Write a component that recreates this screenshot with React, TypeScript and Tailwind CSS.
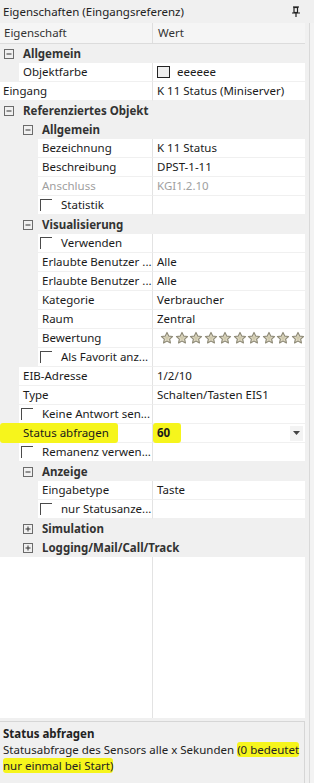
import React from 'react';

type Row =
  | { kind: 'group'; level: 0 | 1; label: string; open: boolean }
  | {
      kind: 'prop';
      margin: 0 | 19 | 38;
      label: string;
      value?: React.ReactNode;
      check?: boolean;
      muted?: boolean;
      marked?: boolean;
    };

const Stars: React.FC = () => (
  <div className="flex items-center gap-[0.5px] pl-[3px]">
    {Array.from({ length: 10 }).map((_, i) => (
      <svg key={i} width="14" height="14" viewBox="0 0 24 24">
        <path
          d="M12 2.5l2.9 6.2 6.6.7-5 4.5 1.4 6.6L12 17.2l-5.9 3.3 1.4-6.6-5-4.5 6.6-.7z"
          fill="#e6e1cc"
          stroke="#8f8b78"
          strokeWidth="2"
          strokeLinejoin="round"
        />
        <path d="M12 7l1.5 3.3 3.4.4-2.6 2.3.8 3.4L12 14.7l-3.1 1.7.8-3.4-2.6-2.3 3.4-.4z" fill="#cfc9ad" />
      </svg>
    ))}
  </div>
);

const rows: Row[] = [
  { kind: 'group', level: 0, label: 'Allgemein', open: true },
  {
    kind: 'prop',
    margin: 19,
    label: 'Objektfarbe',
    value: (
      <span className="flex items-center gap-[7px]">
        <span className="w-[13px] h-[12px] border border-[#222] bg-[#eeeeee]" />
        eeeeee
      </span>
    ),
  },
  { kind: 'prop', margin: 0, label: 'Eingang', value: 'K 11 Status (Miniserver)' },
  { kind: 'group', level: 0, label: 'Referenziertes Objekt', open: true },
  { kind: 'group', level: 1, label: 'Allgemein', open: true },
  { kind: 'prop', margin: 38, label: 'Bezeichnung', value: 'K 11 Status' },
  { kind: 'prop', margin: 38, label: 'Beschreibung', value: 'DPST-1-11' },
  { kind: 'prop', margin: 38, label: 'Anschluss', value: 'KGI1.2.10', muted: true },
  { kind: 'prop', margin: 38, label: 'Statistik', check: true },
  { kind: 'group', level: 1, label: 'Visualisierung', open: true },
  { kind: 'prop', margin: 38, label: 'Verwenden', check: true },
  { kind: 'prop', margin: 38, label: 'Erlaubte Benutzer ...', value: 'Alle' },
  { kind: 'prop', margin: 38, label: 'Erlaubte Benutzer ...', value: 'Alle' },
  { kind: 'prop', margin: 38, label: 'Kategorie', value: 'Verbraucher' },
  { kind: 'prop', margin: 38, label: 'Raum', value: 'Zentral' },
  { kind: 'prop', margin: 38, label: 'Bewertung', value: <Stars /> },
  { kind: 'prop', margin: 38, label: 'Als Favorit anz...', check: true },
  { kind: 'prop', margin: 19, label: 'EIB-Adresse', value: '1/2/10' },
  { kind: 'prop', margin: 19, label: 'Type', value: 'Schalten/Tasten EIS1' },
  { kind: 'prop', margin: 19, label: 'Keine Antwort sen...', check: true },
  { kind: 'prop', margin: 19, label: 'Status abfragen', value: '60', marked: true },
  { kind: 'prop', margin: 19, label: 'Remanenz verwen...', check: true },
  { kind: 'group', level: 1, label: 'Anzeige', open: true },
  { kind: 'prop', margin: 38, label: 'Eingabetype', value: 'Taste' },
  { kind: 'prop', margin: 38, label: 'nur Statusanze...', check: true },
  { kind: 'group', level: 1, label: 'Simulation', open: false },
  { kind: 'group', level: 1, label: 'Logging/Mail/Call/Track', open: false },
];

const ExpandBox: React.FC<{ open: boolean }> = ({ open }) => (
  <svg width="10" height="10" viewBox="0 0 10 10" className="shrink-0">
    <rect x="0.5" y="0.5" width="9" height="9" fill="none" stroke="#6b6b6b" />
    <line x1="2.5" y1="5" x2="7.5" y2="5" stroke="#333" />
    {!open && <line x1="5" y1="2.5" x2="5" y2="7.5" stroke="#333" />}
  </svg>
);

const Checkbox: React.FC = () => (
  <span className="w-[12px] h-[12px] border-t border-l border-[#4a4a4a] shrink-0" />
);

const GridRow: React.FC<{ row: Row }> = ({ row }) => {
  if (row.kind === 'group') {
    return (
      <div
        className={`h-[19px] flex items-center bg-[#f0f0f0] font-bold text-[#333] ${
          row.level === 0 ? 'pl-[4px]' : 'pl-[23px]'
        }`}
      >
        <ExpandBox open={row.open} />
        <span className="ml-[9px] whitespace-nowrap">{row.label}</span>
      </div>
    );
  }
  const margin = row.margin === 0 ? 'pl-0' : row.margin === 19 ? 'pl-[19px]' : 'pl-[38px]';
  return (
    <div className={`h-[19px] flex bg-[#f0f0f0] ${margin}`}>
      <div className="relative flex-1 flex items-center bg-white border-b border-[#f0f0f0] min-w-0">
        {row.marked && (
          <span className="absolute left-[-19px] top-[-1px] h-[20px] w-[118px] bg-[#f6f51c] rounded-[3px]" />
        )}
        {row.check ? (
          <>
            <span className="ml-[2px] flex items-center">
              <Checkbox />
            </span>
            <span className="relative ml-[9px] whitespace-nowrap">{row.label}</span>
          </>
        ) : (
          <span
            className={`relative whitespace-nowrap ${row.margin === 0 ? 'ml-[3px]' : 'ml-[4px]'} ${
              row.muted ? 'text-[#a0a0a0]' : ''
            }`}
          >
            {row.label}
          </span>
        )}
      </div>
      <div
        className={`relative w-[153px] shrink-0 flex items-center bg-white border-l border-l-[#e3e3e3] border-b border-b-[#f0f0f0] pl-[4px] ${
          row.muted ? 'text-[#a0a0a0]' : ''
        }`}
      >
        {row.marked ? (
          <>
            <span className="absolute left-0 top-[-1px] h-[20px] w-[28px] bg-[#f6f51c] rounded-[3px]" />
            <span className="relative font-bold">{row.value}</span>
            <span className="ml-auto mr-[2px] w-[13px] h-[15px] flex items-center justify-center bg-[#f3f3f3]">
              <svg width="7" height="4" viewBox="0 0 7 4">
                <path d="M0 0h7L3.5 4z" fill="#444" />
              </svg>
            </span>
          </>
        ) : (
          <span className="whitespace-nowrap">{row.value}</span>
        )}
      </div>
    </div>
  );
};

export default function App() {
  return (
    <div
      className="w-[314px] h-[783px] flex flex-col bg-[#f0f0f0] text-[11.5px] text-[#1a1a1a] overflow-hidden"
      style={{ fontFamily: '"Noto Sans", "Open Sans", sans-serif' }}
    >
      <div className="h-[23px] shrink-0 flex items-center pl-[3px] pr-[14px] bg-[#f0f0f0]">
        <span className="text-[#222] whitespace-nowrap">Eigenschaften (Eingangsreferenz)</span>
        <svg width="8" height="11" viewBox="0 0 8 11" className="ml-auto">
          <path d="M1 1h6" stroke="#222" strokeWidth="1.2" />
          <rect x="2" y="1.5" width="3.5" height="5" fill="none" stroke="#222" strokeWidth="1.2" />
          <path d="M0 7h8M4 7v4" stroke="#222" strokeWidth="1.2" />
        </svg>
      </div>

      <div className="flex-1 flex min-h-0">
        <div className="w-[305px] flex flex-col">
          <div className="h-[21px] shrink-0 flex items-center bg-[#f5f5f5] border-b border-[#dcdcdc] text-[#333]">
            <span className="w-[152px] pl-[4px]">Eigenschaft</span>
            <span className="pl-[5px] border-l border-[#dedede] h-full flex items-center">Wert</span>
          </div>
          {rows.map((row, i) => (
            <GridRow key={i} row={row} />
          ))}
          <div className="flex-1 flex bg-white">
            <div className="w-[152px]" />
            <div className="flex-1 border-l border-[#e3e3e3]" />
          </div>
          <div className="h-[3px] bg-[#f0f0f0]" />
          <div className="h-[62px] shrink-0 bg-[#f0f0f0] border-t border-r border-[#d6d6d6] px-[3px] pt-[4px] leading-[16px] text-[#222]">
            <div className="font-bold">Status abfragen</div>
            <div className="whitespace-nowrap">
              Statusabfrage des Sensors alle x Sekunden{' '}
              <span className="bg-[#f6f51c] rounded-[3px]">(0 bedeutet</span>
            </div>
            <div>
              <span className="bg-[#f6f51c] rounded-[3px]">nur einmal bei Start)</span>
            </div>
          </div>
        </div>
        <div className="flex-1 flex">
          <div className="w-[4px] bg-[#f0f0f0]" />
          <div className="w-[1px] bg-[#d9d9d9]" />
          <div className="flex-1 bg-[#f3f3f3]" />
        </div>
      </div>
    </div>
  );
}
